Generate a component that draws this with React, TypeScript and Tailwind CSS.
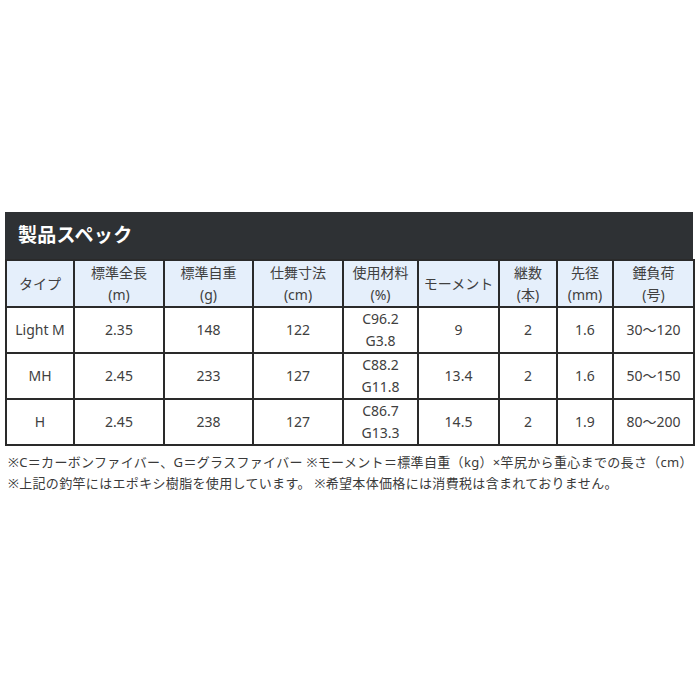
export default function App() {
  const headers: [string, string | null][] = [
    ["タイプ", null],
    ["標準全長", "(m)"],
    ["標準自重", "(g)"],
    ["仕舞寸法", "(cm)"],
    ["使用材料", "(%)"],
    ["モーメント", null],
    ["継数", "(本)"],
    ["先径", "(mm)"],
    ["錘負荷", "(号)"],
  ]

  const rows = [
    ["Light M", "2.35", "148", "122", ["C96.2", "G3.8"], "9", "2", "1.6", "30〜120"],
    ["MH", "2.45", "233", "127", ["C88.2", "G11.8"], "13.4", "2", "1.6", "50〜150"],
    ["H", "2.45", "238", "127", ["C86.7", "G13.3"], "14.5", "2", "1.9", "80〜200"],
  ]

  const widths = [68, 90, 89, 90, 75, 81, 58, 56, 81]

  return (
    <div
      className="w-[700px] h-[700px] bg-white pt-[212px] pl-[5px] pr-[7px]"
      style={{ fontFamily: '"Noto Sans", "Noto Sans CJK JP", sans-serif' }}
    >
      {/* TITLE BAR */}
      <div className="h-[47px] bg-[#2e3134] flex items-center pl-[13px]">
        <h2 className="text-white font-bold text-[19px] leading-none tracking-[0.3px]">
          製品スペック
        </h2>
      </div>

      {/* TABLE */}
      <table className="w-[688px] table-fixed border-collapse text-[14px] text-[#404040]">
        <colgroup>
          {widths.map((w, i) => (
            <col key={i} style={{ width: w }} />
          ))}
        </colgroup>
        <thead>
          <tr className="h-[47px] bg-[#e5effb]">
            {headers.map(([a, b], i) => (
              <th
                key={i}
                className="border-2 border-[#2a2a2a] font-normal text-center leading-[22px] p-0"
              >
                <div>{a}</div>
                {b && <div>{b}</div>}
              </th>
            ))}
          </tr>
        </thead>
        <tbody>
          {rows.map((r, ri) => (
            <tr key={ri} className="h-[46px]">
              {r.map((c, ci) => (
                <td
                  key={ci}
                  className="border-2 border-[#2a2a2a] text-center leading-[22px] p-0"
                >
                  {Array.isArray(c) ? (
                    <>
                      <div>{c[0]}</div>
                      <div>{c[1]}</div>
                    </>
                  ) : (
                    c
                  )}
                </td>
              ))}
            </tr>
          ))}
        </tbody>
      </table>

      {/* NOTES */}
      <div className="mt-[6px] pl-[3px] text-[13px] leading-[21px] tracking-[0.33px] text-[#3a3a3a] whitespace-nowrap">
        <p>※C＝カーボンファイバー、G＝グラスファイバー ※モーメント＝標準自重（kg）×竿尻から重心までの長さ（cm）</p>
        <p>※上記の釣竿にはエポキシ樹脂を使用しています。 ※希望本体価格には消費税は含まれておりません。</p>
      </div>
    </div>
  )
}
